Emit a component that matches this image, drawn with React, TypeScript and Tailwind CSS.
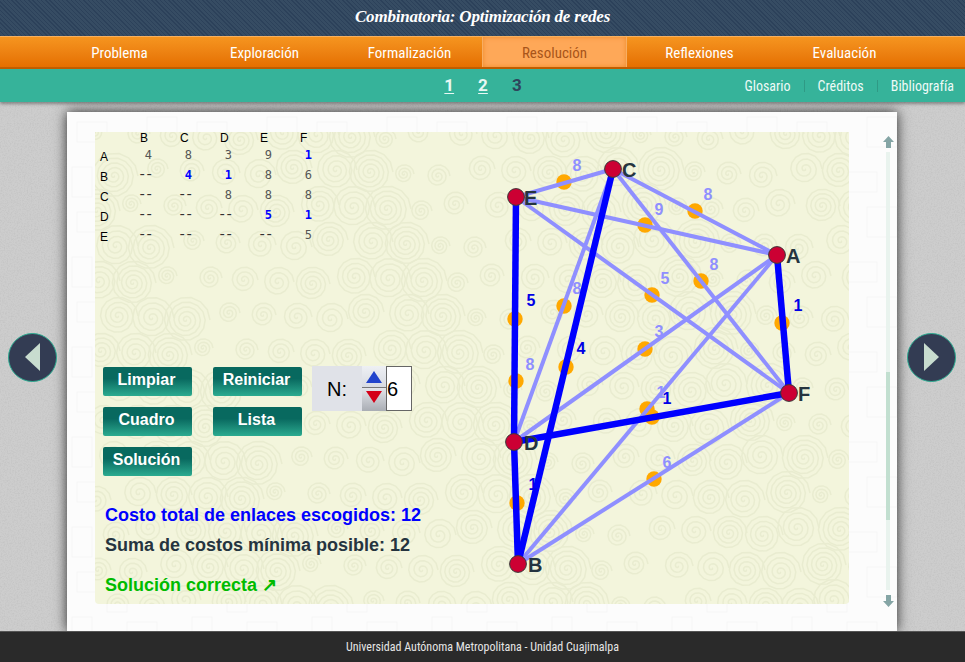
import React from "react";

const sans = "font-['Liberation_Sans',Arial,sans-serif]";
const condensed = "font-['Roboto',sans-serif] [font-stretch:75%]";

const nodes = {
  E: [516, 197],
  C: [613, 169],
  A: [777, 255],
  F: [789, 393],
  D: [514, 442],
  B: [518, 564],
} as const;
type N = keyof typeof nodes;

const light: [N, N][] = [
  ["E", "C"], ["C", "A"], ["E", "A"], ["E", "F"], ["C", "F"],
  ["C", "D"], ["A", "D"], ["A", "B"], ["F", "B"],
];
const heavy: [N, N][] = [["E", "D"], ["C", "B"], ["A", "F"], ["D", "F"], ["D", "B"]];

const dots = [
  [564, 182], [695, 211], [645, 225], [782, 323], [652, 295], [701, 281], [515, 319], [564, 306],
  [645, 349], [516, 381], [566, 367], [647, 409], [652, 417], [654, 479], [517, 503],
];
const weights: [number, number, string, boolean][] = [
  [577, 171, "8", false], [708, 200, "8", false], [659, 215, "9", false], [798, 311, "1", true],
  [665, 284, "5", false], [714, 270, "8", false], [531, 306, "5", true], [577, 294, "8", false],
  [659, 337, "3", false], [530, 370, "8", false], [581, 354, "4", true], [661, 398, "1", false],
  [667, 404, "1", true], [667, 468, "6", false], [533, 490, "1", true],
];
const labels: [N, number, number][] = [
  ["E", 524, 205], ["C", 622, 177], ["A", 786, 263], ["F", 798, 401], ["D", 524, 450], ["B", 528, 572],
];

function spiral(cx: number, cy: number, r: number, turns: number) {
  let d = "";
  const steps = turns * 14;
  for (let i = 0; i <= steps; i++) {
    const t = i / steps;
    const a = t * turns * Math.PI * 2;
    const x = cx + Math.cos(a) * r * t;
    const y = cy + Math.sin(a) * r * t;
    d += `${i ? "L" : "M"}${x.toFixed(1)} ${y.toFixed(1)}`;
  }
  return d;
}

const spirals: [number, number, number][] = [];
for (let row = 0; row < 14; row++) {
  for (let col = 0; col < 22; col++) {
    const i = row * 22 + col;
    const r = 10 + ((i * 17) % 15);
    const x = col * 36 + (row % 2 ? 18 : 0) + ((i * 7) % 9);
    const y = row * 36 + ((i * 11) % 9);
    spirals.push([x, y, r]);
  }
}

function Texture() {
  return (
    <svg className="absolute inset-0 w-full h-full" width="754" height="472" aria-hidden="true">
      <g fill="none" stroke="#e9ecd0" strokeWidth="1.5">
        {spirals.map(([x, y, r], i) => (
          <path key={i} d={spiral(x, y, r, Math.max(3, Math.round(r / 5)))} />
        ))}
      </g>
    </svg>
  );
}

function Tiles() {
  return (
    <svg className="absolute inset-0 w-full h-full" aria-hidden="true">
      <pattern id="tiles" width="120" height="90" patternUnits="userSpaceOnUse">
        <g fill="none" stroke="#f6f6f6" strokeWidth="1">
          <rect x="10" y="10" width="30" height="20" />
          <rect x="40" y="30" width="20" height="20" />
          <rect x="80" y="5" width="30" height="30" />
          <rect x="60" y="60" width="30" height="20" />
          <rect x="5" y="55" width="20" height="30" />
        </g>
      </pattern>
      <rect width="100%" height="100%" fill="url(#tiles)" />
    </svg>
  );
}

function Noise() {
  return (
    <svg className="absolute inset-0 w-full h-full" aria-hidden="true">
      <filter id="grain">
        <feTurbulence type="fractalNoise" baseFrequency="0.7" numOctaves="3" seed="4" />
        <feColorMatrix values="0 0 0 0 0.35  0 0 0 0 0.35  0 0 0 0 0.35  0 0 0 0.45 -0.18" />
      </filter>
      <rect width="100%" height="100%" filter="url(#grain)" />
    </svg>
  );
}

function Graph() {
  return (
    <svg className="absolute left-0 top-0" width="754" height="472" viewBox="95 132 754 472">
      {dots.map(([x, y], i) => (
        <circle key={i} cx={x} cy={y} r="7.7" fill="#ffa800" />
      ))}
      {light.map(([a, b], i) => (
        <line key={i} x1={nodes[a][0]} y1={nodes[a][1]} x2={nodes[b][0]} y2={nodes[b][1]} stroke="#8f8fff" strokeWidth="4" />
      ))}
      {weights.filter((w) => !w[3]).map(([x, y, t], i) => (
        <text key={i} x={x} y={y} textAnchor="middle" fontFamily="Liberation Sans" fontWeight="700" fontSize="16" fill="#8f8fff">{t}</text>
      ))}
      {heavy.map(([a, b], i) => (
        <line key={i} x1={nodes[a][0]} y1={nodes[a][1]} x2={nodes[b][0]} y2={nodes[b][1]} stroke="#0000ff" strokeWidth="6.5" />
      ))}
      {weights.filter((w) => w[3]).map(([x, y, t], i) => (
        <text key={i} x={x} y={y} textAnchor="middle" fontFamily="Liberation Sans" fontWeight="700" fontSize="16" fill="#0000e6">{t}</text>
      ))}
      {(Object.keys(nodes) as N[]).map((k) => (
        <circle key={k} cx={nodes[k][0]} cy={nodes[k][1]} r="8.4" fill="#cc0033" stroke="#3a3a3a" strokeWidth="1" />
      ))}
      {labels.map(([k, x, y]) => (
        <text key={k} x={x} y={y} fontFamily="Liberation Sans" fontWeight="700" fontSize="20" fill="#25343f">{k}</text>
      ))}
    </svg>
  );
}

const matrix: [string, string[]][] = [
  ["A", ["4", "8", "3", "9", "*1"]],
  ["B", ["--", "*4", "*1", "8", "6"]],
  ["C", ["--", "--", "8", "8", "8"]],
  ["D", ["--", "--", "--", "*5", "*1"]],
  ["E", ["--", "--", "--", "--", "5"]],
];

function Matrix() {
  return (
    <div className="h-[118px] pl-[5px]">
      <div className="flex h-[12px] items-center text-[12px] leading-none text-black font-['Liberation_Sans',sans-serif]">
        <span className="w-[40px]" />
        {["B", "C", "D", "E", "F"].map((h) => (
          <span key={h} className="w-[40px]">{h}</span>
        ))}
      </div>
      <div className="mt-[1px] flex flex-col">
        {matrix.map(([r, vals]) => (
          <div key={r} className="flex h-[20px] items-center">
            <span className={`w-[12px] text-[12px] text-black ${sans} pt-[3px]`}>{r}</span>
            {vals.map((v, i) => (
              <span
                key={i}
                className={`w-[40px] text-right ${
                  v === "--"
                    ? "font-['Liberation_Mono',monospace] text-[14px] leading-none tracking-[-1.4px] text-[#333]"
                    : "font-['DejaVu_Sans_Mono',monospace] text-[12px]"
                } ${v[0] === "*" ? "font-bold text-[#0000ff]" : v === "--" ? "" : "text-[#555]"}`}
              >
                {v.replace("*", "")}
              </span>
            ))}
          </div>
        ))}
      </div>
    </div>
  );
}

function Btn({ children }: { children: string }) {
  return (
    <button
      className={`flex h-[29px] w-[89px] items-start justify-center rounded-[2px] bg-gradient-to-b from-[#08695f] from-40% to-[#2bab90] pt-[4px] pr-[2px] text-[16px] font-bold leading-[18px] text-white ${sans}`}
    >
      {children}
    </button>
  );
}

function Stepper() {
  return (
    <div className="flex h-[45px] w-[100px] self-start bg-[#e0e2e8]">
      <div className={`flex w-[50px] items-center justify-center text-[20px] text-black ${sans}`}>N:</div>
      <div className="flex w-[24px] flex-col">
        <div className="flex h-[22px] items-center justify-center border-b border-[#777] bg-gradient-to-b from-[#eef0f4] to-[#d8dbe2]">
          <svg width="16" height="12" viewBox="0 0 16 12"><path d="M8 0L16 12H0Z" fill="#2244cc" /></svg>
        </div>
        <div className="flex h-[23px] items-start justify-center bg-gradient-to-b from-[#e4e6ea] to-[#a9adb4] pt-[3px]">
          <svg width="16" height="12" viewBox="0 0 16 12"><path d="M0 0H16L8 12Z" fill="#d40018" /></svg>
        </div>
      </div>
      <div className={`flex w-[26px] items-center border border-[#666] bg-white text-[20px] text-black ${sans}`}>6</div>
    </div>
  );
}

function Arrow({ dir }: { dir: "left" | "right" }) {
  return (
    <button className="z-10 flex h-[49px] w-[49px] shrink-0 items-center justify-center rounded-full border border-[#2bab90] bg-[#333c53]">
      <svg width="16" height="28" viewBox="0 0 16 28">
        <path d={dir === "left" ? "M15 0V28L0 14Z" : "M0 0V28L15 14Z"} fill="#c8dccf" />
      </svg>
    </button>
  );
}

function ScrollBar() {
  return (
    <div className="flex w-[12px] flex-col items-center pt-[4px]">
      <svg width="11" height="12" viewBox="0 0 11 12"><path d="M5.5 0L11 6H8V12H3V6H0Z" fill="#85a5a5" /></svg>
      <div className="mt-[4px] h-[438px] w-[4px] bg-[#e9f3ee] pt-[220px]">
        <div className="h-[148px] w-full bg-[#c2dfd0]" />
      </div>
      <svg className="mt-[5px]" width="11" height="12" viewBox="0 0 11 12"><path d="M3 0H8V6H11L5.5 12L0 6H3Z" fill="#85a5a5" /></svg>
    </div>
  );
}

export default function App() {
  const nav = ["Problema", "Exploración", "Formalización", "Resolución", "Reflexiones", "Evaluación"];
  return (
    <div className="flex h-[662px] w-[965px] flex-col overflow-hidden bg-[#cdcdcd]">
      <header className="flex h-[36px] shrink-0 items-center justify-center bg-[#2f455c] bg-[repeating-linear-gradient(45deg,#2c415a_0px,#2c415a_1px,#364c63_1px,#364c63_3px)] pb-[3px]">
        <h1 className="font-['Liberation_Serif',serif] text-[17px] font-bold italic leading-none tracking-[-0.2px] text-white">
          Combinatoria: Optimización de redes
        </h1>
      </header>

      <nav className="flex h-[33px] shrink-0 border-t border-[#f6b060] border-b-2 border-b-[#c25f00] bg-gradient-to-b from-[#f5951f] to-[#e56f00] pl-[47px]">
        {nav.map((n) => {
          const active = n === "Resolución";
          return (
            <div
              key={n}
              className={`flex w-[145px] items-center justify-center pt-[2px] text-[15px] leading-none ${condensed} ${
                active
                  ? "border-x border-[#f8ae62] bg-[#fea858] text-[#a8551a] shadow-[inset_0_0_5px_#ef8a2a]"
                  : "text-white"
              }`}
            >
              {n}
            </div>
          );
        })}
      </nav>

      <div className="z-20 grid h-[33px] shrink-0 grid-cols-[1fr_auto_1fr] items-center bg-[#36b39a] shadow-[0_2px_3px_rgba(0,0,0,0.35)]">
        <div />
        <div className="flex gap-[24px] pl-[1px] font-['Roboto',sans-serif] text-[17px] font-bold leading-none">
          <span className="text-[#e8f8f4] underline underline-offset-2">1</span>
          <span className="text-[#e8f8f4] underline underline-offset-2">2</span>
          <span className="text-[#2f455c]">3</span>
        </div>
        <div className={`flex items-center justify-end pr-[11px] text-[14px] leading-none text-[#eefaf7] ${condensed}`}>
          <span>Glosario</span>
          <span className="mx-[13px] h-[12px] w-px bg-[#2f9a85]" />
          <span>Créditos</span>
          <span className="mx-[13px] h-[12px] w-px bg-[#2f9a85]" />
          <span>Bibliografía</span>
        </div>
      </div>

      <main className="relative flex min-h-0 flex-1 items-stretch gap-[10px] pl-[8px] pt-[10px]">
        <Noise />
        <div className="relative flex h-[490px] items-center">
          <Arrow dir="left" />
        </div>
        <section className="relative flex w-[830px] bg-[#fcfcfc] pl-[28px] pt-[20px] shadow-[0_0_12px_rgba(0,0,0,0.8)]">
          <Tiles />
          <div className="relative h-[472px] w-[754px] overflow-hidden rounded-b-[4px] bg-[#f3f5dc]">
            <Texture />
            <Graph />
            <div className="relative flex h-full w-[340px] flex-col">
              <Matrix />
              <div className="mt-[117px] flex gap-[10px] pl-[8px]">
                <div className="grid grid-cols-[89px_89px] gap-x-[21px] gap-y-[11px]">
                  <Btn>Limpiar</Btn>
                  <Btn>Reiniciar</Btn>
                  <Btn>Cuadro</Btn>
                  <Btn>Lista</Btn>
                  <Btn>Solución</Btn>
                </div>
                <div className="-mt-[1px]">
                  <Stepper />
                </div>
              </div>
              <div className={`mt-[29px] w-[420px] pl-[10px] text-[18px] font-bold leading-[21px] ${sans}`}>
                <p className="text-[#0000ff]">Costo total de enlaces escogidos: 12</p>
                <p className="mt-[9px] text-[#25343f]">Suma de costos mínima posible: 12</p>
                <p className="mt-[19px] text-[#00bb00]">Solución correcta ↗</p>
              </div>
            </div>
          </div>
          <div className="relative ml-[33px]">
            <ScrollBar />
          </div>
        </section>
        <div className="relative flex h-[490px] items-center">
          <Arrow dir="right" />
        </div>
      </main>

      <footer className={`z-20 flex h-[31px] shrink-0 items-center justify-center border-t border-[#555] bg-[#2a2a2a] text-[12px] text-[#e6e6e6] ${condensed}`}>
        Universidad Autónoma Metropolitana - Unidad Cuajimalpa
      </footer>
    </div>
  );
}
